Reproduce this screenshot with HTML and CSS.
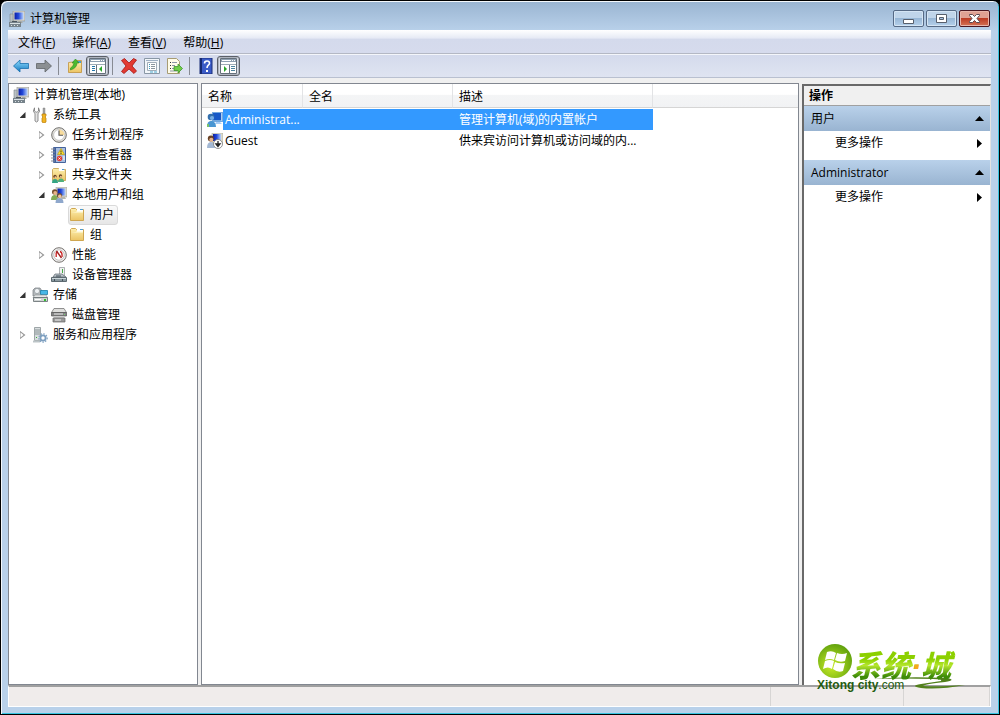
FILE: index.html
```html
<!DOCTYPE html>
<html lang="zh-CN">
<head>
<meta charset="utf-8">
<title>计算机管理</title>
<link rel="stylesheet" href="styles.css">
</head>
<body>
<svg class="defs" aria-hidden="true">
  <defs>
    <linearGradient id="gBlue" x1="0" y1="0" x2="1" y2="0"><stop offset="0" stop-color="#0a1fa8"/><stop offset=".45" stop-color="#2348d8"/><stop offset="1" stop-color="#b8d4ff"/></linearGradient>
    <linearGradient id="gArrow" x1="0" y1="0" x2="0" y2="1"><stop offset="0" stop-color="#8fdcff"/><stop offset="1" stop-color="#1479c0"/></linearGradient>
    <linearGradient id="gFolder" x1="0" y1="0" x2="0" y2="1"><stop offset="0" stop-color="#fdf0b0"/><stop offset="1" stop-color="#ecc464"/></linearGradient>
    <radialGradient id="gBall" cx=".4" cy=".65" r=".7"><stop offset="0" stop-color="#c8ec28"/><stop offset="1" stop-color="#5c9e0c"/></radialGradient>
  </defs>
  <symbol id="computer" viewBox="0 0 16 16">
    <path d="M4 0h12v10H4z" fill="#d8d8d0" stroke="#8a8a86" stroke-width=".6"/><path d="M5.500 1.500h9v7h-9z" fill="url(#gBlue)"/>
    <path d="M9 10h3l2 2H8z" fill="#a8a8a0"/><path d="M1 3h3v8H1z" fill="#b9c0c4" stroke="#7c868c" stroke-width=".6"/>
    <path d="M0 11h12v5H0z" fill="#77838b"/><path d="M1 12h10v1H1zM2 14h1v1H2zM5 14h1v1H5zM8 14h1v1H8z" fill="#d9e1e4"/><path d="M3 10h5v1H3z" fill="#4c565d"/>
  </symbol>
  <symbol id="tools" viewBox="0 0 16 16">
    <path d="M2.500.800q-2.500 3.500.500 6V14q1.500 2 3 0V6.800q3-2.500.500-6V4L5 5.200H4L2.500 4z" fill="#e4e4e4" stroke="#777" stroke-width=".8"/>
    <path d="M11 1h2v6h-2z" fill="#a5a5a5" stroke="#777" stroke-width=".4"/><path d="M10 7h4v2l-1 1 1 1v4l-1 .700h-2L10 15v-4l1-1-1-1z" fill="#f2b422" stroke="#b67b0c" stroke-width=".7"/>
  </symbol>
  <symbol id="clock" viewBox="0 0 16 16">
    <circle cx="8" cy="8" r="7.300" fill="#e5e3de" stroke="#706f6c"/><circle cx="8" cy="8" r="5.400" fill="#fff" stroke="#b8b8b4" stroke-width=".7"/>
    <path d="M8 8V2.600A5.400 5.400 0 0 1 13.400 8z" fill="#f8dc9c"/><path d="M8 3.500V8.300h4" fill="none" stroke="#555" stroke-width="1.100"/>
  </symbol>
  <symbol id="event" viewBox="0 0 16 16">
    <path d="M2.500.500h12v15h-12z" fill="#a9bedf" stroke="#44639c"/><path d="M2 1h3v14H2z" fill="#3f5f9d"/><path d="M0 2h4M0 5h4M0 8h4M0 11h4M0 14h4" stroke="#8a8f9a"/>
    <path d="M10 1.500l3.500 6h-7z" fill="#ffe22e" stroke="#b99500" stroke-width=".6"/><path d="M10 3.500v2M10 6v1" stroke="#333"/>
    <circle cx="8.500" cy="11.500" r="2.700" fill="#e04038"/><path d="M7.500 10.500l2 2M9.500 10.500l-2 2" stroke="#fff" stroke-width=".8"/><path d="M12 10h2M12 12h2" stroke="#fff"/>
  </symbol>
  <symbol id="share" viewBox="0 0 16 16">
    <path d="M1.500 4V2.500l1-1h5l1 1h6v11h-13z" fill="url(#gFolder)" stroke="#c49b45" stroke-width=".8"/><path d="M8 2h5v2H8z" fill="#fff"/><path d="M11 2h2v1h-2z" fill="#4b9ad0"/>
    <circle cx="4" cy="9.500" r="1.700" fill="#6b4524"/><circle cx="4.400" cy="10.300" r="1" fill="#efc49b"/><path d="M1 16q0-4 3-4t3 4z" fill="#35a583"/>
    <circle cx="9.500" cy="9" r="1.700" fill="#6b4524"/><circle cx="9.900" cy="9.800" r="1" fill="#efc49b"/><path d="M7 15q0-3.500 3-3.500t3 3.500z" fill="#4fb07c"/>
  </symbol>
  <symbol id="users" viewBox="0 0 16 16">
    <path d="M5 0h11v10H5z" fill="#d6d5c9" stroke="#9b9a92" stroke-width=".5"/><path d="M6.500 1.500h8v7h-8z" fill="url(#gBlue)"/><path d="M11 10h3l1 2h-5z" fill="#b8b8ae"/>
    <circle cx="3.800" cy="5" r="2.800" fill="#76502f"/><circle cx="4.200" cy="6" r="1.900" fill="#e8b489"/><path d="M0 13q0-5 4-5 3 1 3 5z" fill="#83ab56"/>
    <circle cx="8.500" cy="8.500" r="2.600" fill="#6d513c"/><circle cx="8.800" cy="9.400" r="1.800" fill="#f0c29c"/><path d="M4.500 16q0-5 4-5t4 5z" fill="#8fa8cc"/>
  </symbol>
  <symbol id="folder" viewBox="0 0 16 16">
    <path d="M1.500 13.500v-11l1-1h4l1 1h7v11z" fill="url(#gFolder)" stroke="#cfa650"/><path d="M8 2h6v2H8z" fill="#fff"/><path d="M11 2h3v1h-3z" fill="#4b9ad0"/><path d="M2 5.500l5-.500 1-1h6v1.500z" fill="#fffbe0"/>
  </symbol>
  <symbol id="gauge" viewBox="0 0 16 16">
    <circle cx="8" cy="8" r="7.300" fill="#eee" stroke="#77736f"/><circle cx="8" cy="8" r="5.200" fill="#fff" stroke="#a49f9b" stroke-width=".6"/>
    <path d="M5.200 10V6l1.300-1.500M9 4.500q2.500.500 2 5.500" fill="none" stroke="#c82222" stroke-width="1.300"/><path d="M5.500 4l5 7" stroke="#a02020" stroke-width="1.400"/>
  </symbol>
  <symbol id="device" viewBox="0 0 16 16">
    <path d="M8.500.500h5v8h-5z" fill="#f0f1f1" stroke="#8d9295" stroke-width=".7"/><path d="M11 2h1v4h-1z" fill="#45aa45"/>
    <path d="M2 10l2-3h7l4 3z" fill="#b9c2c8" stroke="#5e6970" stroke-width=".7"/><path d="M.500 10.500h15v4h-15z" fill="#8a989f" stroke="#5d6a71"/><path d="M1 11h14v1H1z" fill="#cbd6da"/><path d="M5 8.500h5v1H5zM3 12h1v2H3zM11 12h1v2h-1z" fill="#44515a"/>
  </symbol>
  <symbol id="storage" viewBox="0 0 16 16">
    <path d="M1 3l2-2h5l2 3v5H1z" fill="#b4b8bb" stroke="#777d81" stroke-width=".7"/><circle cx="5" cy="4" r="2.600" fill="#edf0f2" stroke="#81898e" stroke-width=".6"/>
    <path d="M8.500 3.500h7v4h-7z" fill="#48b7e7" stroke="#1b7da9" stroke-width=".8"/><path d="M1 10.500l2-2.500h11l1.500 2.500z" fill="#e4e6e6" stroke="#8a9192" stroke-width=".6"/><path d="M1.500 10.500h14v4h-14z" fill="#d0d4d4" stroke="#616a6c" stroke-width=".8"/><path d="M12 12h2v2h-2z" fill="#2fc02f"/><path d="M3 12h6v1H3z" fill="#fff"/>
  </symbol>
  <symbol id="disk" viewBox="0 0 16 16">
    <path d="M3 1.500h10l2.500 4H.500z" fill="#dededc" stroke="#777" stroke-width=".8"/><path d="M.500 5.500h15v3.500h-15z" fill="#858585" stroke="#555" stroke-width=".7"/><path d="M3 6.500h9v1H3z" fill="#ececec"/>
    <path d="M3 9h10v2H3z" fill="#ccc"/><path d="M2 11h12v4H2z" fill="#9a9a9a" stroke="#666" stroke-width=".7"/><path d="M4 12.500h6v1H4z" fill="#eee"/><path d="M13 7h1v1h-1z" fill="#76d276"/>
  </symbol>
  <symbol id="services" viewBox="0 0 16 16">
    <path d="M2.500.500h6v13h-6z" fill="#d9dedf" stroke="#8a9396" stroke-width=".8"/><path d="M3 3h5M3 5h5M3 7h5" stroke="#748084" stroke-width=".8"/><path d="M4 10h1v1H4z" fill="#3aad3a"/><path d="M1 13.500h7v2H1z" fill="#bcc4c7"/>
    <circle cx="11" cy="11" r="2.600" fill="#fff" stroke="#7d9fc0" stroke-width="1.800"/><circle cx="11" cy="11" r="4.200" fill="none" stroke="#7d9fc0" stroke-width="1.200" stroke-dasharray="1.400 1.400"/>
  </symbol>
  <symbol id="admin" viewBox="0 0 16 16">
    <path d="M5 0h11v10H5z" fill="#73a8df"/><path d="M6 1h8v7H6z" fill="#1758c8"/><path d="M14 1h1v8h-1zM9 10h4l2 2H8z" fill="#a9cdf4"/>
    <circle cx="4" cy="5" r="3.300" fill="#336fae"/><circle cx="5" cy="6" r="2.100" fill="#76aee6"/><path d="M0 15q0-7 5-6 4 1 4 6z" fill="#4a96d2"/><path d="M0 12h2v3H0z" fill="#7cc36c"/>
  </symbol>
  <symbol id="guest" viewBox="0 0 16 16">
    <path d="M5 0h11v10H5z" fill="#dddccc" stroke="#9a998f" stroke-width=".5"/><path d="M6 1h8v7H6z" fill="url(#gBlue)"/>
    <circle cx="3.800" cy="5.500" r="3" fill="#694328"/><circle cx="4.300" cy="6.800" r="2" fill="#eab48c"/><path d="M0 15q0-6 4-6 4 1 4 6z" fill="#a3b8d4"/>
    <circle cx="11" cy="11" r="4.500" fill="#fff" stroke="#777" stroke-width=".8"/><path d="M11 8v4M9 11l2 2.500 2-2.500z" stroke="#222" stroke-width="1.300" fill="#222"/>
  </symbol>
  <symbol id="back" viewBox="0 0 16 16"><path d="M.500 8L7 2v3.500h8.500v5H7V14z" fill="url(#gArrow)" stroke="#1870ad" stroke-width=".8"/></symbol>
  <symbol id="forward" viewBox="0 0 16 16"><path d="M15.500 8L9 2v3.500H.500v5H9V14z" fill="#8b8f92" stroke="#5f6468" stroke-width=".8"/></symbol>
  <symbol id="up" viewBox="0 0 16 16">
    <path d="M1.500 14.500v-10l5-.500 2-1.500h6v12z" fill="url(#gFolder)" stroke="#c0923c" stroke-width=".8"/><path d="M10 3h4v2h-4z" fill="#4a9fd4"/><path d="M3.500 10q3-1.500 3.500-5H5L8.500 1 12 5h-2q0 5-6.500 7z" fill="#4cbb2e" stroke="#2c8a20" stroke-width=".6"/>
  </symbol>
  <symbol id="panel-left" viewBox="0 0 17 16">
    <path d="M.500.500h16v15H.500z" fill="#fff" stroke="#66717c"/><path d="M1 1h15v3H1z" fill="#8fa0b2"/><path d="M2 2h9v1H2zM12 2h1v1h-1zM14 2h1v1h-1z" fill="#fff"/><path d="M1 6.500h15" stroke="#9eabb5"/><path d="M7.500 7v8" stroke="#66717c"/><path d="M3 8.500h3M3 10.500h3M3 12.500h3" stroke="#2475a9"/><path d="M13 8v6l-3-3z" fill="#2aa52a"/>
  </symbol>
  <symbol id="panel-right" viewBox="0 0 17 16">
    <path d="M.500.500h16v15H.500z" fill="#fff" stroke="#66717c"/><path d="M1 1h15v3H1z" fill="#8fa0b2"/><path d="M2 2h9v1H2zM12 2h1v1h-1zM14 2h1v1h-1z" fill="#fff"/><path d="M1 6.500h15" stroke="#9eabb5"/><path d="M9.500 7v8" stroke="#66717c"/><path d="M11 8.500h4M11 10.500h4M11 12.500h4" stroke="#4d839e"/><path d="M4 8v6l3-3z" fill="#2aa52a"/>
  </symbol>
  <symbol id="delete" viewBox="0 0 16 16"><path d="M.500 2.500l3-2L8 5l4.500-4.500 3 1.500L11 8l4.500 5-2.500 2.500L8 11l-5 4.500-2.500-2L5 8z" fill="#e23a32" stroke="#a31611" stroke-width=".8"/></symbol>
  <symbol id="props" viewBox="0 0 16 16"><path d="M.500.500h15v15H.500z" fill="#f2f6fa" stroke="#8997a5"/><path d="M2 2.500h12" stroke="#9eb0c4"/><path d="M3.500 4.500h9v8h-9z" fill="#fff" stroke="#a1adb8"/><path d="M5 6.500h1M5 8.500h1M5 10.500h1" stroke="#3798bd"/><path d="M7 6.500h4M7 8.500h4M7 10.500h4" stroke="#8a969e"/><path d="M6 14h3M10 14h3" stroke="#4aabd0"/></symbol>
  <symbol id="export" viewBox="0 0 16 16"><path d="M.500.500h9l3 3v12h-12z" fill="#fffce8" stroke="#a79c74"/><path d="M3 4.500h1M3 7.500h1M3 10.500h1" stroke="#333"/><path d="M5 4.500h5M5 7.500h3M5 10.500h3M3 13h7" stroke="#8b95a5"/><path d="M7 8.500h4V6l4.500 4.500L11 15v-2.500H7z" fill="#6fce46" stroke="#348d22" stroke-width=".7"/></symbol>
  <symbol id="help" viewBox="0 0 16 16"><path d="M2 0h12v16H2z" fill="#3a5bc7" stroke="#1b2e79"/><path d="M2 0h2v16H2z" fill="#16296f"/><path d="M6.500 5.500q0-2.500 2.500-2.500t2.500 2.200q0 1-1.200 2T9 10" fill="none" stroke="#fff" stroke-width="1.600"/><path d="M8 12h2v2H8z" fill="#fff"/></symbol>
</svg>

<div class="window">
  <header class="titlebar">
    <svg class="icon"><use href="#computer"/></svg>
    <h1 class="title">计算机管理</h1>
    <div class="caption-buttons">
      <button class="caption" type="button" aria-label="最小化"><svg width="13" height="11" viewBox="0 0 13 11"><path d="M1.500 6.500h10v4h-10z" fill="#fff" stroke="#575f6c"/></svg></button>
      <button class="caption" type="button" aria-label="最大化"><svg width="13" height="11" viewBox="0 0 13 11"><path d="M1.500 1.500h10v8h-10z" fill="#fff" stroke="#575f6c"/><path d="M4.500 4.500h4v2h-4z" fill="#a7c3e2" stroke="#575f6c"/></svg></button>
      <button class="caption close" type="button" aria-label="关闭"><svg width="13" height="11" viewBox="0 0 13 11"><path d="M1.500 1.500h3l2 2 2-2h3v1l-2.500 3 2.500 3v1h-3l-2-2-2 2h-3v-1L4 5.500l-2.500-3z" fill="#fff" stroke="#5b4a52"/></svg></button>
    </div>
  </header>

  <div class="client">
    <nav class="menubar">
      <button type="button">文件(<u>F</u>)</button>
      <button type="button">操作(<u>A</u>)</button>
      <button type="button">查看(<u>V</u>)</button>
      <button type="button">帮助(<u>H</u>)</button>
    </nav>
    <div class="toolbar" role="toolbar">
      <button type="button" aria-label="后退"><svg class="icon"><use href="#back"/></svg></button>
      <button type="button" aria-label="前进"><svg class="icon"><use href="#forward"/></svg></button>
      <span class="sep"></span>
      <button type="button" aria-label="向上"><svg class="icon"><use href="#up"/></svg></button>
      <button class="pressed" type="button" aria-label="显示控制台树"><svg class="icon wide"><use href="#panel-left"/></svg></button>
      <span class="sep"></span>
      <button type="button" aria-label="删除"><svg class="icon"><use href="#delete"/></svg></button>
      <button type="button" aria-label="属性"><svg class="icon"><use href="#props"/></svg></button>
      <button type="button" aria-label="导出列表"><svg class="icon"><use href="#export"/></svg></button>
      <span class="sep"></span>
      <button type="button" aria-label="帮助"><svg class="icon"><use href="#help"/></svg></button>
      <button class="pressed" type="button" aria-label="显示操作窗格"><svg class="icon wide"><use href="#panel-right"/></svg></button>
    </div>

    <main class="panes">
      <nav class="pane tree">
        <div class="node root"><svg class="icon"><use href="#computer"/></svg><span>计算机管理(本地)</span></div>
        <ul>
          <li>
            <div class="node"><span class="twist open"></span><svg class="icon"><use href="#tools"/></svg><span>系统工具</span></div>
            <ul>
              <li class="node"><span class="twist closed"></span><svg class="icon"><use href="#clock"/></svg><span>任务计划程序</span></li>
              <li class="node"><span class="twist closed"></span><svg class="icon"><use href="#event"/></svg><span>事件查看器</span></li>
              <li class="node"><span class="twist closed"></span><svg class="icon"><use href="#share"/></svg><span>共享文件夹</span></li>
              <li>
                <div class="node"><span class="twist open"></span><svg class="icon"><use href="#users"/></svg><span>本地用户和组</span></div>
                <ul class="leaves">
                  <li class="node selected"><svg class="icon"><use href="#folder"/></svg><span>用户</span></li>
                  <li class="node"><svg class="icon"><use href="#folder"/></svg><span>组</span></li>
                </ul>
              </li>
              <li class="node"><span class="twist closed"></span><svg class="icon"><use href="#gauge"/></svg><span>性能</span></li>
              <li class="node"><span class="twist"></span><svg class="icon"><use href="#device"/></svg><span>设备管理器</span></li>
            </ul>
          </li>
          <li>
            <div class="node"><span class="twist open"></span><svg class="icon"><use href="#storage"/></svg><span>存储</span></div>
            <ul>
              <li class="node"><span class="twist"></span><svg class="icon"><use href="#disk"/></svg><span>磁盘管理</span></li>
            </ul>
          </li>
          <li class="node"><span class="twist closed"></span><svg class="icon"><use href="#services"/></svg><span>服务和应用程序</span></li>
        </ul>
      </nav>

      <section class="pane list">
        <table>
          <colgroup><col class="c-name"><col class="c-full"><col class="c-desc"><col></colgroup>
          <thead><tr><th>名称</th><th>全名</th><th>描述</th><th></th></tr></thead>
          <tbody>
            <tr class="current"><td><div class="name"><svg class="icon"><use href="#admin"/></svg><span>Administrat...</span></div></td><td></td><td>管理计算机(域)的内置帐户</td><td></td></tr>
            <tr><td><div class="name"><svg class="icon"><use href="#guest"/></svg><span>Guest</span></div></td><td></td><td>供来宾访问计算机或访问域的内...</td><td></td></tr>
          </tbody>
        </table>
      </section>

      <aside class="actions">
        <h2>操作</h2>
        <section>
          <button class="group" type="button">用户<svg width="9" height="5" viewBox="0 0 9 5"><path d="M4.500 0L9 5H0z"/></svg></button>
          <button class="more" type="button">更多操作<svg width="5" height="9" viewBox="0 0 5 9"><path d="M0 0l5 4.500L0 9z"/></svg></button>
        </section>
        <section>
          <button class="group" type="button">Administrator<svg width="9" height="5" viewBox="0 0 9 5"><path d="M4.500 0L9 5H0z"/></svg></button>
          <button class="more" type="button">更多操作<svg width="5" height="9" viewBox="0 0 5 9"><path d="M0 0l5 4.500L0 9z"/></svg></button>
        </section>
      </aside>
    </main>

    <footer class="status"><span class="main-cell"></span><span class="cell"></span><span class="cell small"></span></footer>
  </div>

  <div class="brand">
    <svg class="brand-art" viewBox="0 0 150 48">
      <circle cx="18" cy="18" r="17" fill="url(#gBall)"/>
      <path d="M10 9q5-2 9 1l-2 7q-4-2-9 0zM20 10q5 2 10 0l-2 8q-5 2-10-1zM8 18q5-2 9 0l-2 8q-4-3-9 0zM18 19q4 2 10 1l-2 8q-5 2-10-2z" fill="#fff"/>
      <path d="M56 36q34-3 74-1 10 2-2 4-20 2-22 4 14 1 42-1-26 5-44 3-12-2 0-4l20-3q2-2-8-2-30-1-60 0z" fill="#52801c"/>
    </svg>
    <span class="brand-name">系统<i>·</i>城</span>
    <span class="brand-url"><b>Xitong city</b>.com</span>
  </div>
</div>
</body>
</html>
```
FILE: styles.css
```css
* { box-sizing: border-box; }
body {
  margin: 0;
  background: #000;
  color: #000;
  font: 12px/20px "Open Sans", "Noto Sans CJK SC", sans-serif;
}
button {
  margin: 0;
  padding: 0;
  border: 0;
  background: none;
  color: inherit;
  font: inherit;
}
ul { list-style: none; margin: 0; padding: 0; }
h1, h2 { margin: 0; font: inherit; }
svg { display: block; flex: none; }
.defs { position: absolute; width: 0; height: 0; }
.icon { width: 16px; height: 16px; }
.icon.wide { width: 17px; }

.window {
  position: relative;
  display: flex;
  flex-direction: column;
  height: 100vh;
  padding: 0 8px 7px 7px;
  border: 1px solid #000;
  border-radius: 7px 7px 0 0;
  background: linear-gradient(#99b4d1, #b9d1ea 30px);
  box-shadow: inset 1px 1px #f4f8fc, inset -1px -1px #38c4e0;
}
.titlebar {
  display: flex;
  align-items: center;
  gap: 5px;
  height: 29px;
  padding: 6px 1px 0;
}
.title { flex: 1; }
.caption-buttons { display: flex; gap: 2px; }
.caption {
  display: grid;
  place-items: center;
  width: 31px;
  height: 17px;
  border: 1px solid #566a85;
  border-radius: 2px;
  background: linear-gradient(#c0d5ea 45%, #98b7d6 50%, #b5d1eb);
  box-shadow: inset 0 0 0 1px #d5e5f4;
}
.caption.close {
  border-color: #4a1620;
  background: linear-gradient(#e0a193 45%, #bd3c24 50%, #d47356);
  box-shadow: inset 0 0 0 1px #e8b5aa;
}

.client {
  flex: 1;
  display: flex;
  flex-direction: column;
  min-height: 0;
  background: #f0f0f0;
}
.menubar {
  display: flex;
  gap: 1px;
  height: 24px;
  padding: 2px 0 0 2px;
  border-bottom: 1px solid #b4b8c4;
  background: linear-gradient(#fff, #e6eaf5 35%, #d4daec 40%, #d6dbed);
}
.menubar button { padding: 0 8px; }
.toolbar {
  display: flex;
  align-items: center;
  height: 24px;
  padding-left: 1px;
  border-top: 1px solid #f4f6fb;
  border-bottom: 1px solid #b9c0d0;
  background: linear-gradient(#d4daec, #dfe4f1);
}
.toolbar button {
  display: grid;
  place-items: center;
  width: 23px;
  height: 20px;
}
.toolbar .pressed {
  border: 1px solid #5b6068;
  border-radius: 3px;
  background: #d9dde6;
  box-shadow: inset 0 0 0 1px #aeb3be;
}
.sep { width: 8px; height: 18px; padding-left: 3px; }
.sep::before { content: ""; display: block; width: 1px; height: 18px; background: #878b93; }

.panes {
  flex: 1;
  display: grid;
  grid-template-columns: 190px minmax(0, 1fr) 189px;
  gap: 3px;
  min-height: 0;
  padding-top: 5px;
}
.pane { border: 1px solid #828790; background: #fff; overflow: hidden; }

.tree { padding: 1px 4px; }
.tree li ul { padding-left: 19px; }
.node { display: flex; align-items: center; gap: 5px; height: 20px; white-space: nowrap; }
.twist { display: flex; align-items: center; justify-content: center; width: 19px; margin-right: -5px; }
.twist.open::before {
  content: "";
  width: 6px;
  height: 6px;
  background: #333;
  clip-path: polygon(100% 0, 100% 100%, 0 100%);
}
.twist.closed::before {
  content: "";
  width: 6px;
  height: 9px;
  background: #999;
  clip-path: polygon(0 0, 100% 50%, 0 100%, 0 0, 1px 2px, 1px 7px, 4px 50%, 1px 2px);
}
.tree .leaves { padding-left: 36px; }
.leaves .node { width: max-content; padding: 0 3px 0 0; border: 1px solid transparent; }
.leaves .selected {
  border-color: #d9d9d9;
  border-radius: 3px;
  background: linear-gradient(#fafafa, #e6e6e6);
}

table { width: 100%; table-layout: fixed; border-collapse: separate; border-spacing: 0; }
.c-name { width: 101px; }
.c-full { width: 150px; }
.c-desc { width: 200px; }
th {
  height: 24px;
  padding: 2px 6px 0;
  border-right: 1px solid #e2e3e5;
  border-bottom: 1px solid #d5d5d5;
  background: linear-gradient(#fff 45%, #f4f5f6 50%, #f1f2f4);
  font-weight: normal;
  text-align: left;
}
th:last-child { border-right: 0; }
tbody::before { content: ""; display: block; height: 1px; }
td { height: 21px; padding: 0 6px; line-height: 19px; white-space: nowrap; border: solid transparent; border-width: 1px 0; }
td:first-child { padding: 0 0 0 5px; }
.name { display: flex; align-items: center; gap: 2px; }
.current td { background: #39f; color: #fff; border-color: #39f; }
.current td:first-child { background: linear-gradient(90deg, #fff 21px, #39f 21px) border-box; border-color: transparent; }
.current td:last-child { background: none; border-color: transparent; }

.actions {
  border: solid #696969;
  border-width: 2px 1px 0 2px;
  border-right-color: #e3e3e3;
  background: #fff;
  margin-top: 1px;
}
.actions h2 {
  height: 20px;
  padding-left: 5px;
  border-bottom: 1px solid #a0a0a0;
  background: #f0f0f0;
  font-weight: bold;
}
.actions section { height: 53px; margin: 0 0 1px; }
.actions button {
  display: flex;
  align-items: center;
  justify-content: space-between;
  width: 100%;
  height: 25px;
}
.actions .group { padding: 0 6px 0 7px; background: linear-gradient(#b9d1ea, #99b4d1); }
.actions .more { height: 24px; padding: 0 8px 0 31px; }

.status {
  display: flex;
  height: 22px;
  border: 1px solid #fff;
  border-top: 2px solid #a0a0a0;
  background: #f0eceb;
}
.status span { border-right: 1px solid #d7d5d4; }
.main-cell { flex: 1; }
.cell { width: 133px; }
.cell.small { width: 86px; }

.brand { position: absolute; right: 32px; bottom: 23px; width: 150px; height: 48px; }
.brand-art { width: 150px; height: 48px; }
.brand-name {
  position: absolute;
  left: 34px;
  top: 7px;
  padding-right: 8px;
  background: linear-gradient(#8cd000 30%, #b4e62c 50%, #3f8c08 85%);
  background-clip: text;
  color: transparent;
  font: italic 900 30px/28px "Noto Sans CJK SC", sans-serif;
  white-space: nowrap;
}
.brand-name i { color: #f7a81b; font-family: "Liberation Sans", sans-serif; }
.brand-url {
  position: absolute;
  left: 0;
  bottom: 0;
  color: #245c10;
  font: 12px/12px "Liberation Sans", sans-serif;
  white-space: nowrap;
}
```
